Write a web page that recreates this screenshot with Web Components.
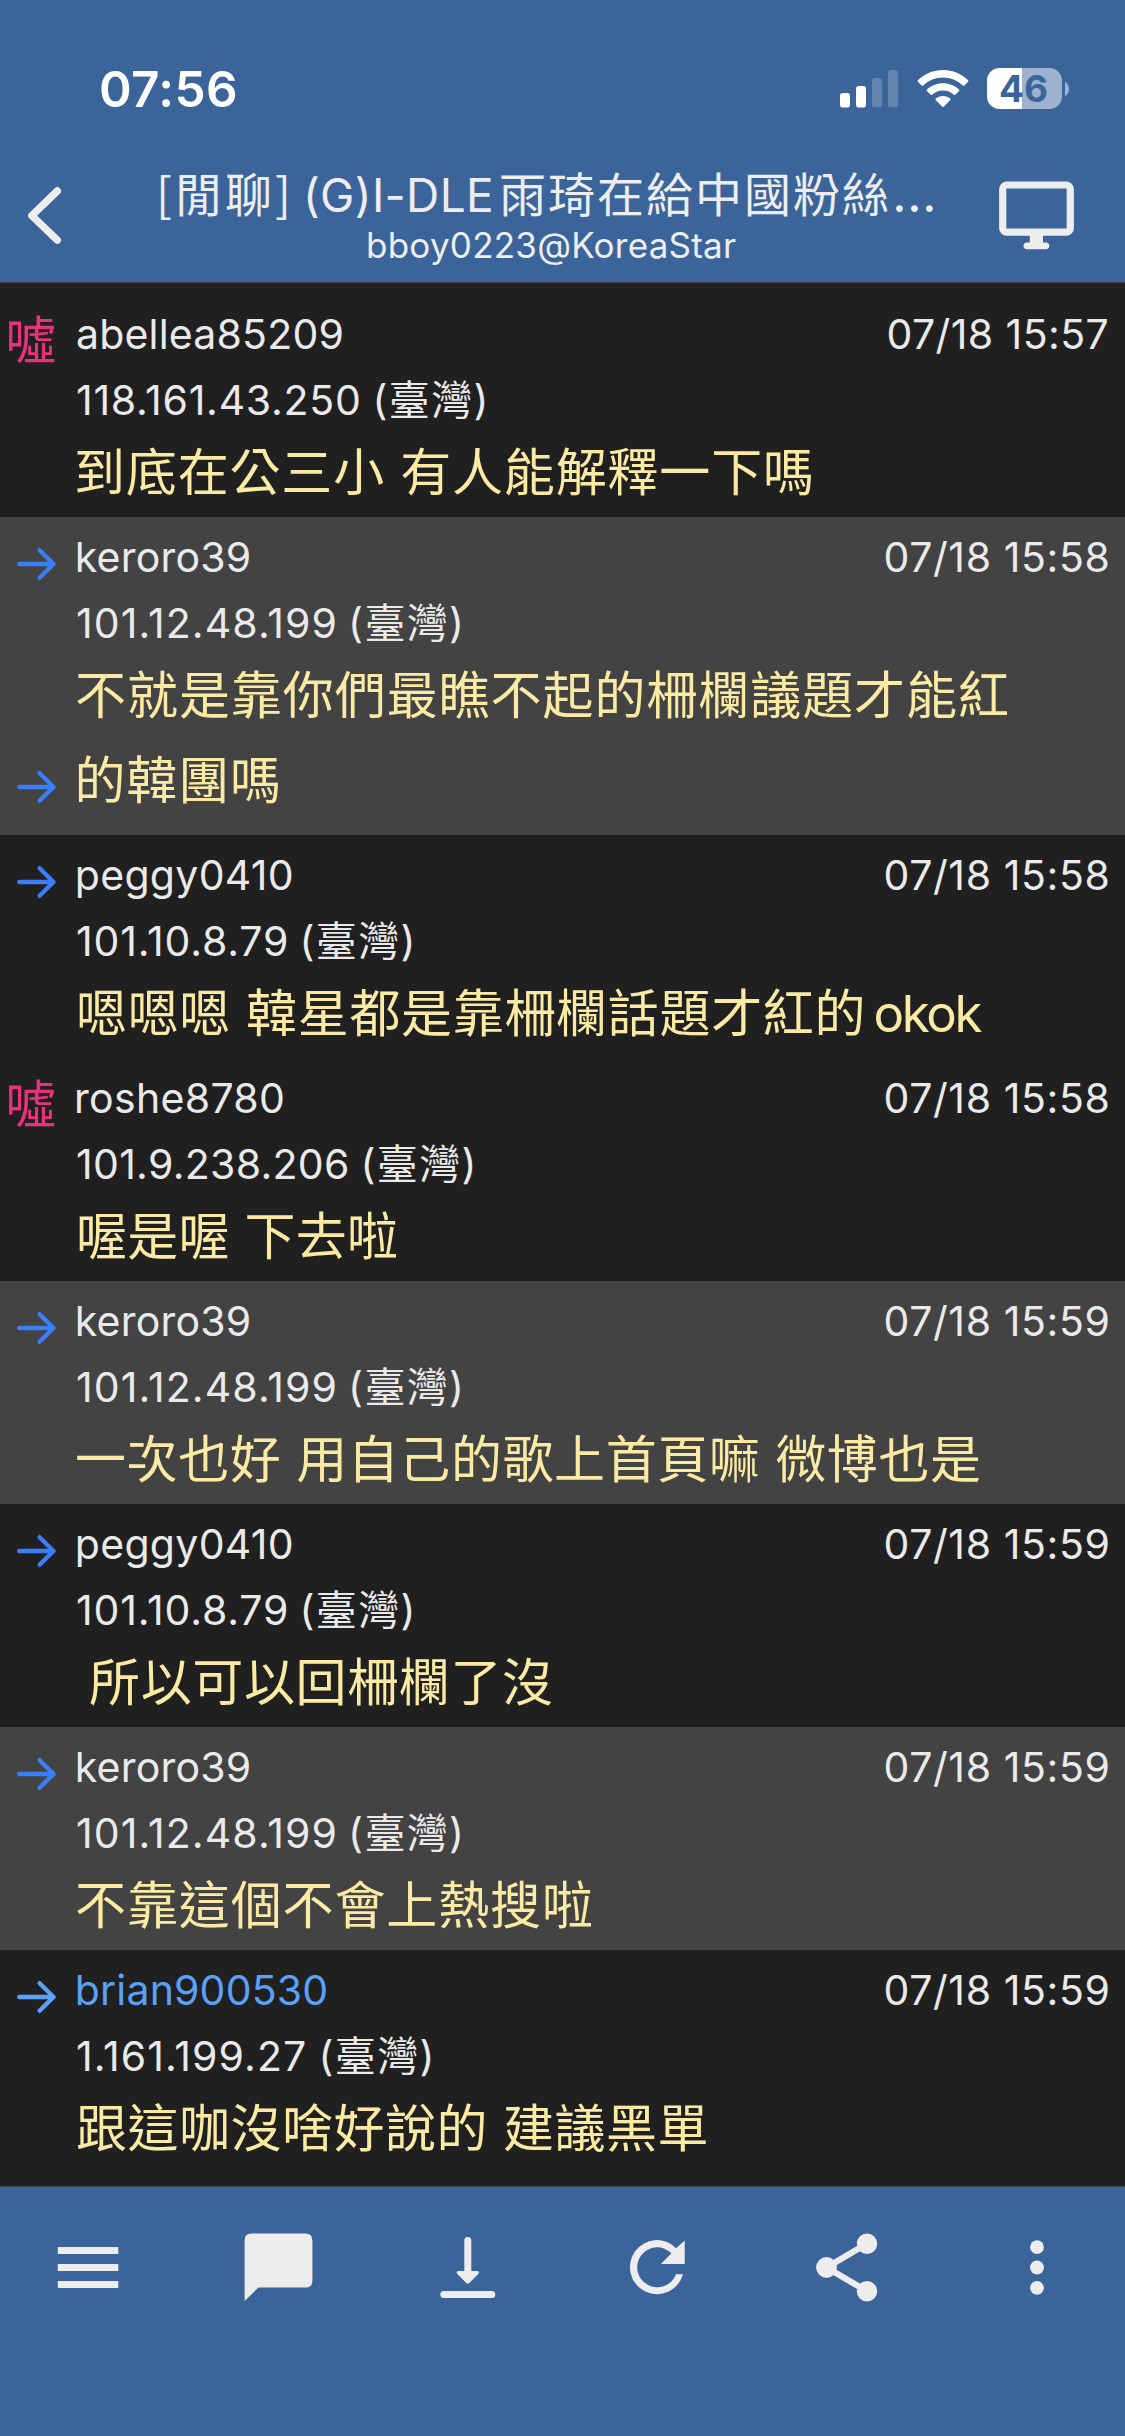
<!DOCTYPE html>
<html lang="zh-Hant">
<head>
<meta charset="utf-8">
<meta name="viewport" content="width=device-width">
<title>KoreaStar</title>
<style>
html,body{margin:0;padding:0;background:#202020}
body{font-family:Inter,"Noto Sans CJK TC",sans-serif;color:#eaeaea}
</style>
</head>
<body>
<thread-app>
  <status-bar slot="top"><ink-text w="135">07:56</ink-text></status-bar>
  <nav-header slot="top">
    <ink-text slot="title" class="cjk" w="126">[閒聊]</ink-text>
    <ink-text slot="title" w="184" style="margin-left:21px">(G)I-DLE</ink-text>
    <ink-text slot="title" class="cjk" w="387" style="margin-left:10px">雨琦在給中國粉絲</ink-text>
    <ink-text slot="title" class="dots" w="39" style="margin-left:8px">…</ink-text>
    <ink-text slot="sub" w="368">bboy0223@KoreaStar</ink-text>
  </nav-header>

  <push-row kind="boo">
    <ink-text slot="user" w="264.5">abellea85209</ink-text><ink-text slot="date" w="219">07/18 15:57</ink-text>
    <ink-text slot="ip" w="282">118.161.43.250</ink-text>
    <ink-text slot="msg" w="734">到底在公三小 有人能解釋一下嗎</ink-text>
  </push-row>
  <push-row kind="arrow" lit>
    <ink-text slot="user" w="171">keroro39</ink-text><ink-text slot="date" w="222">07/18 15:58</ink-text>
    <ink-text slot="ip" w="257.6">101.12.48.199</ink-text>
    <ink-text slot="msg" w="930">不就是靠你們最瞧不起的柵欄議題才能紅</ink-text>
  </push-row>
  <push-more lit><ink-text w="199.5" style="margin-left:1.5px">的韓團嗎</ink-text></push-more>
  <push-row kind="arrow">
    <ink-text slot="user" w="214">peggy0410</ink-text><ink-text slot="date" w="222">07/18 15:58</ink-text>
    <ink-text slot="ip" w="209">101.10.8.79</ink-text>
    <ink-text slot="msg" w="783.5" style="margin-left:2px">嗯嗯嗯 韓星都是靠柵欄話題才紅的</ink-text><ink-text slot="msg" w="107" style="margin-left:13px">okok</ink-text>
  </push-row>
  <push-row kind="boo">
    <ink-text slot="user" w="206">roshe8780</ink-text><ink-text slot="date" w="222">07/18 15:58</ink-text>
    <ink-text slot="ip" w="270">101.9.238.206</ink-text>
    <ink-text slot="msg" w="317" style="margin-left:2px">喔是喔 下去啦</ink-text>
  </push-row>
  <push-row kind="arrow" lit>
    <ink-text slot="user" w="171">keroro39</ink-text><ink-text slot="date" w="222">07/18 15:59</ink-text>
    <ink-text slot="ip" w="257.6">101.12.48.199</ink-text>
    <ink-text slot="msg" w="903">一次也好 用自己的歌上首頁嘛 微博也是</ink-text>
  </push-row>
  <push-row kind="arrow">
    <ink-text slot="user" w="214">peggy0410</ink-text><ink-text slot="date" w="222">07/18 15:59</ink-text>
    <ink-text slot="ip" w="209">101.10.8.79</ink-text>
    <ink-text slot="msg" w="462" style="margin-left:13px">所以可以回柵欄了沒</ink-text>
  </push-row>
  <push-row kind="arrow" lit>
    <ink-text slot="user" w="171">keroro39</ink-text><ink-text slot="date" w="222">07/18 15:59</ink-text>
    <ink-text slot="ip" w="257.6">101.12.48.199</ink-text>
    <ink-text slot="msg" w="514">不靠這個不會上熱搜啦</ink-text>
  </push-row>
  <push-row kind="arrow" author>
    <ink-text slot="user" w="248.5">brian900530</ink-text><ink-text slot="date" w="222">07/18 15:59</ink-text>
    <ink-text slot="ip" w="228">1.161.199.27</ink-text>
    <ink-text slot="msg" w="629.5">跟這咖沒啥好說的 建議黑單</ink-text>
  </push-row>

  <tool-bar slot="bottom"></tool-bar>
</thread-app>

<script>
const define = (name, html, init) => customElements.define(name, class extends HTMLElement {
  constructor() {
    super();
    this.attachShadow({ mode: 'open' }).innerHTML = html;
  }
  connectedCallback() { if (init) init.call(this); }
});

const arrow = `<svg class="arrow" width="77" height="40" viewBox="0 0 77 40" fill="none" stroke="currentColor" stroke-width="4.4" stroke-linecap="round" stroke-linejoin="round"><path d="M19.3 20H53.5M39.6 6.2L53.5 20L39.6 33.8"/></svg>`;

define('thread-app', `<style>
  :host{display:flex;flex-direction:column;width:1125px;height:2436px;background:#202020;overflow:hidden}
  header{flex:none;height:282px;background:#3b659a;border-bottom:1px solid #414141}
  main{flex:1;padding-top:11px;display:flex;flex-direction:column}
  footer{flex:none;height:249px;background:#3b659a;border-top:1px solid #414141}
</style><header><slot name="top"></slot></header><main><slot></slot></main><footer><slot name="bottom"></slot></footer>`);

define('status-bar', `<style>
  :host{display:flex;height:140px;box-sizing:border-box;padding:59px 56px 0 101px;justify-content:space-between;align-items:flex-start;color:#fff}
  .time{font-size:49.5px;font-weight:600;line-height:60px}
  .right{display:flex;gap:18.5px;padding-top:9px}
  .bat{display:flex;gap:3px;align-items:center}
  .cell{width:75px;height:41px;box-sizing:border-box;border-radius:12.5px;background:linear-gradient(90deg,#fff 35px,#9db2cc 35px);color:#3b659a;font:700 37px/41px Inter,sans-serif;text-align:center;padding-right:2px}
  .wifi{margin-top:1px}
  svg{display:block}
</style>
<div class="time"><slot></slot></div>
<div class="right">
  <svg width="58" height="41" viewBox="0 0 58 41" fill="#fff"><rect x="0" y="25" width="10" height="14.5" rx="2.8"/><rect x="16" y="18" width="10" height="21.5" rx="2.8"/><g opacity=".2"><rect x="32" y="10" width="10" height="29.5" rx="2.8"/><rect x="48" y="2" width="10" height="37.5" rx="2.8"/></g></svg>
  <svg class="wifi" width="52" height="40" viewBox="0 0 52 40" fill="#fff"><path d="M26 1C16.3 1 7.300 5 .9 11.200Q.2 12 .9 12.800L4.600 16.600Q5.400 17.300 6.200 16.600C11.500 11.500 18.500 8.600 26 8.600S40.500 11.500 45.800 16.600Q46.600 17.300 47.400 16.600L51.100 12.800Q51.800 12 51.100 11.200C44.700 5 35.700 1 26 1Z"/><path d="M26 14.200C19.900 14.200 14.200 16.500 10 20.400Q9.200 21.100 9.900 21.900L13.700 25.700Q14.400 26.300 15.200 25.700C18.100 23.200 21.900 21.600 26 21.600S33.900 23.200 36.800 25.700Q37.600 26.300 38.300 25.700L42.100 21.900Q42.800 21.100 42 20.400C37.800 16.500 32.100 14.200 26 14.200Z"/><path d="M26 27C23.200 27 20.700 28 18.800 29.500Q18 30.300 18.700 31.100L25.300 37.700Q26 38.300 26.700 37.700L33.300 31.100Q34 30.300 33.200 29.500C31.300 28 28.800 27 26 27Z"/></svg>
  <div class="bat"><div class="cell">46</div><svg width="4" height="14" viewBox="0 0 4 14"><path d="M0 0C5.300 2 5.300 12 0 14Z" fill="#9db2cc"/></svg></div>
</div>`);

define('nav-header', `<style>
  :host{display:flex;height:142px;color:#ededed}
  .mid{width:900px;display:flex;flex-direction:column;align-items:center;padding-top:22.5px}
  .title{display:flex;align-items:baseline;font-size:46px;line-height:58px;padding-right:5px}
  ::slotted(.cjk){font-family:"Noto Sans CJK TC",sans-serif;font-size:47px}
  ::slotted(.dots){font-size:52px}
  .sub{font-size:35px;line-height:42px;padding-left:4px}
  svg{display:block}
</style>
<svg width="100" height="142" viewBox="0 140 100 142" fill="none" stroke="currentColor" stroke-width="7.400" stroke-linecap="round" stroke-linejoin="round"><path d="M57.300 191L31.800 215.700L57.300 240.200"/></svg>
<div class="mid"><div class="title"><slot name="title"></slot></div><div class="sub"><slot name="sub"></slot></div></div>
<svg width="125" height="142" viewBox="1000 140 125 142" style="overflow:visible" fill="currentColor"><rect x="1002.700" y="185" width="67.600" height="47.200" rx="4" fill="none" stroke="currentColor" stroke-width="7.200"/><path d="M1029.800 235H1043V242.500H1046.500A3.400 3.400 0 0 1 1046.500 249.200H1026.300A3.400 3.400 0 0 1 1026.300 242.500H1029.800Z"/></svg>`);

define('push-row', `<style>
  :host{display:flex;flex:none;height:223px;--mark:#3a7ff8}
  :host([lit]){background:#434343}
  :host([author]){--mark:#58a2f8;--user:#58a2f8}
  .mark{width:77px;flex:none;color:var(--mark)}
  .arrow{display:block;margin-top:27px}
  .boo{color:#e9327c;font-size:51px;line-height:60px;padding:17px 0 0 5.500px}
  .body{flex:1;padding:7px 17.5px 0 0}
  .head{display:flex;justify-content:space-between;font-size:41px;line-height:66px}
  .user{color:var(--user,inherit);padding-left:.8px}
  :host([kind=boo]) .user{padding-left:0}
  .ip{font-size:41px;line-height:64px;padding-top:1px;display:flex;gap:17.5px}
  .msg{font-size:51px;line-height:81px;color:#faeaa4;white-space:nowrap;display:flex}
</style>
<div class="mark"></div>
<div class="body">
  <div class="head"><div class="user"><slot name="user"></slot></div><div><slot name="date"></slot></div></div>
  <div class="ip"><slot name="ip"></slot><ink-text class="region" w="108">(臺灣)</ink-text></div>
  <div class="msg"><slot name="msg"></slot></div>
</div>`, function () {
  this.shadowRoot.querySelector('.mark').innerHTML =
    this.getAttribute('kind') === 'boo' ? '<div class="boo">噓</div>' : arrow;
});

define('push-more', `<style>
  :host{display:flex;flex:none;height:95px;background:#434343}
  .mark{width:77px;flex:none;color:#3a7ff8}
  .arrow{display:block;margin-top:27px}
  .msg{font-size:51px;line-height:81px;color:#faeaa4;display:flex}
</style><div class="mark">${arrow}</div><div class="msg"><slot></slot></div>`);

define('tool-bar', `<style>
  :host{display:flex;justify-content:space-between;padding:40px 48px 0;color:#ededed}
  svg{display:block;width:80px;height:80px;overflow:visible;fill:currentColor}
</style>
<svg viewBox="48.400 2227 80 80"><path d="M58.200 2247H118.700V2254H58.200ZM58.200 2264H118.700V2271H58.200ZM58.200 2281H118.700V2288H58.200Z"/></svg>
<svg viewBox="238.100 2227 80 80"><path d="M251.500 2233.500H305.500Q312.500 2233.500 312.500 2240.500V2280.600Q312.500 2287.600 305.500 2287.600H258.500L244.700 2301V2240.500Q244.700 2233.500 251.500 2233.500Z"/></svg>
<svg viewBox="427.700 2227 80 80"><rect x="440" y="2291" width="55" height="7" rx="3.500"/><path d="M464 2240.500A3.500 3.500 0 0 1 471 2240.500V2271H477.300Q479.600 2271.700 478 2274L469 2283Q467.500 2284.600 466 2283L457 2274Q455.400 2271.700 457.700 2271H464Z"/></svg>
<svg viewBox="617.300 2227 80 80"><path d="M683.300 2274.200A27 27 0 1 1 676.500 2248.200L685 2240.500V2264H661.200L671.800 2253.300A20 20 0 1 0 676.300 2274.200Z"/></svg>
<svg viewBox="806.900 2227 80 80"><path d="M866.900 2243.600L826.300 2267.500L866.900 2291.200" fill="none" stroke="currentColor" stroke-width="6.200"/><circle cx="866.900" cy="2243.700" r="10.200"/><circle cx="866.900" cy="2291.200" r="10.200"/><circle cx="826.400" cy="2267.500" r="10.400"/></svg>
<svg viewBox="996.500 2227 80 80"><circle cx="1036.500" cy="2247.200" r="6.900"/><circle cx="1036.500" cy="2267.500" r="6.900"/><circle cx="1036.500" cy="2287.800" r="6.900"/></svg>`);

/* A run of text whose glyph edges fill exactly the width given in w, by adjusting its tracking. */
const pen = document.createElement('canvas').getContext('2d');
define('ink-text', `<style>:host{display:inline-block;white-space:pre}</style><slot></slot>`, function () {
  const cs = getComputedStyle(this), text = this.textContent, w = +this.getAttribute('w');
  pen.font = `${cs.fontWeight} ${cs.fontSize} ${cs.fontFamily}`;
  const m = pen.measureText(text);
  const n = [...text].length - 1;
  const ink = m.actualBoundingBoxLeft + m.actualBoundingBoxRight;
  if (n > 0) this.style.letterSpacing = ((w - ink) / n).toFixed(3) + 'px';
  this.style.textIndent = m.actualBoundingBoxLeft.toFixed(2) + 'px';
  this.style.width = w + 'px';
});
</script>
</body>
</html>
